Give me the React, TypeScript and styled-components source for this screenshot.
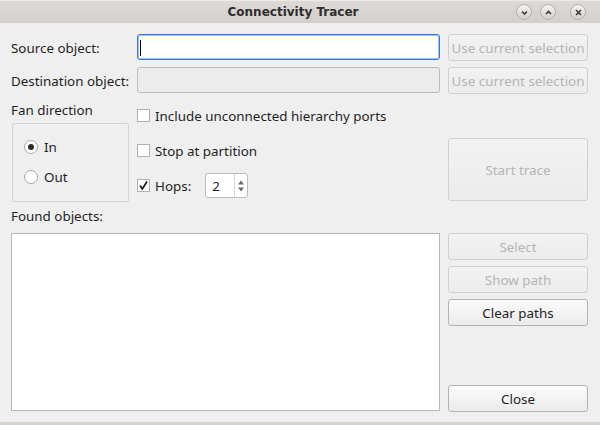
import styled, { createGlobalStyle } from "styled-components";

const GlobalStyle = createGlobalStyle`
  html, body {
    margin: 0;
    padding: 0;
    background: #efefef;
  }
  body {
    font-family: "Noto Sans", "DejaVu Sans", sans-serif;
    font-size: 13.4px;
    color: #1f1f1f;
  }
`;

const Window = styled.div`
  width: 600px;
  height: 425px;
  display: flex;
  flex-direction: column;
  background: #efefef;
  border-bottom: 3px solid #d6d3cf;
  box-sizing: border-box;
`;

const TitleBar = styled.div`
  height: 23px;
  position: relative;
  display: flex;
  align-items: center;
  justify-content: center;
  background: linear-gradient(#dcd9d6, #d3d0cc);
  border-top: 1px solid #ece9e6;
  box-sizing: border-box;
`;

const Title = styled.div`
  font-family: "DejaVu Sans", sans-serif;
  font-weight: bold;
  font-size: 12px;
  color: #2e2e2e;
  margin-left: -14px;
`;

const TitleButtons = styled.div`
  position: absolute;
  right: 14px;
  top: 3px;
  display: flex;
  gap: 8px;
`;

const TitleButton = styled.div<{ $gap?: number }>`
  width: 16px;
  height: 16px;
  border-radius: 50%;
  box-sizing: border-box;
  border: 1px solid #b5b1ad;
  background: linear-gradient(#f6f5f4, #d2cfcc);
  display: flex;
  align-items: center;
  justify-content: center;
  margin-left: ${(p) => p.$gap ?? 0}px;
`;

const Body = styled.div`
  flex: 1;
  display: flex;
  flex-direction: column;
  padding: 11px 12px 10px 11px;
`;

const Row = styled.div<{ $top?: number }>`
  display: grid;
  grid-template-columns: 118px 303px 140px;
  column-gap: 8px;
  height: 27px;
  align-items: center;
  margin-top: ${(p) => p.$top ?? 0}px;
`;

const Label = styled.div`
  white-space: nowrap;
  line-height: 16px;
`;

const TextInput = styled.div<{ $focused?: boolean; $disabled?: boolean }>`
  height: 26px;
  align-self: start;
  box-sizing: border-box;
  border-radius: 3px;
  border: 1px solid ${(p) => (p.$focused ? "#3a7cbd" : "#bcbcbc")};
  box-shadow: ${(p) => (p.$focused ? "inset 0 0 0 1px #9cc1e6" : "none")};
  background: ${(p) => (p.$disabled ? "#ececec" : "#ffffff")};
  padding: 5px 0 0 2px;
`;

const Caret = styled.div`
  width: 1px;
  height: 16px;
  background: #000;
`;

const Button = styled.div<{ $disabled?: boolean; $height?: number; $top?: string }>`
  height: ${(p) => p.$height ?? 27}px;
  box-sizing: border-box;
  border-radius: 3px;
  border: 1px solid ${(p) => (p.$disabled ? "#d0d0d0" : "#b3b3b3")};
  background: ${(p) =>
    p.$disabled ? "linear-gradient(#f2f2f2, #ececec)" : "linear-gradient(#fbfbfb, #ebebeb)"};
  color: ${(p) => (p.$disabled ? "#b5b5b5" : "#1f1f1f")};
  display: flex;
  align-items: center;
  justify-content: center;
  white-space: nowrap;
  margin-top: ${(p) => p.$top ?? "0"};
`;

const Middle = styled.div`
  display: grid;
  grid-template-columns: 118px 303px 140px;
  column-gap: 8px;
  height: 100px;
  margin-top: 8px;
`;

const FanColumn = styled.div`
  display: flex;
  flex-direction: column;
`;

const GroupBox = styled.div`
  margin-top: 5px;
  margin-left: 1px;
  height: 79px;
  box-sizing: border-box;
  border: 1px solid #d3d3d3;
  border-radius: 2px;
  display: flex;
  flex-direction: column;
  justify-content: space-between;
  padding: 14px 0 15px 11px;
`;

const Option = styled.div`
  display: flex;
  align-items: center;
  gap: 6px;
  height: 18px;
`;

const Radio = styled.div<{ $checked?: boolean }>`
  width: 14px;
  height: 14px;
  box-sizing: border-box;
  border-radius: 50%;
  border: 1px solid #a8a8a8;
  background: #fff;
  display: flex;
  align-items: center;
  justify-content: center;
  &::after {
    content: "";
    width: 6px;
    height: 6px;
    border-radius: 50%;
    background: ${(p) => (p.$checked ? "#2c2c2c" : "transparent")};
  }
`;

const Options = styled.div`
  display: flex;
  flex-direction: column;
  gap: 10px;
  padding-top: 1px;
`;

const CheckRow = styled.div`
  display: flex;
  align-items: center;
  height: 25px;
  gap: 5px;
`;

const CheckBox = styled.div`
  width: 13px;
  height: 13px;
  box-sizing: border-box;
  border: 1px solid #b0b0b0;
  background: #fff;
  display: flex;
  align-items: center;
  justify-content: center;
`;

const SpinBox = styled.div`
  margin-left: 9px;
  width: 43px;
  height: 25px;
  box-sizing: border-box;
  border: 1px solid #bcbcbc;
  border-radius: 3px;
  background: #fff;
  display: flex;
`;

const SpinValue = styled.div`
  flex: 1;
  padding-left: 6px;
  display: flex;
  align-items: center;
`;

const SpinArrows = styled.div`
  width: 12px;
  border-left: 1px solid #d8d8d8;
  display: flex;
  align-items: center;
  justify-content: center;
`;

const FoundLabel = styled(Label)`
  margin-top: 6px;
  height: 16px;
`;

const Bottom = styled.div`
  display: grid;
  grid-template-columns: 429px 140px;
  column-gap: 8px;
  margin-top: 9px;
  height: 179px;
`;

const ListBox = styled.div`
  height: 178px;
  box-sizing: border-box;
  border: 1px solid #b8b8b8;
  background: #fff;
`;

const ButtonColumn = styled.div`
  display: flex;
  flex-direction: column;
  gap: 6px;
`;

const Chevron = ({ up }: { up?: boolean }) => (
  <svg width="9" height="9" viewBox="0 0 9 9">
    <path
      d={up ? "M2 6 L4.5 3.5 L7 6" : "M2 3.5 L4.5 6 L7 3.5"}
      stroke="#3a3a3a"
      strokeWidth="1.6"
      fill="none"
    />
  </svg>
);

const CloseGlyph = () => (
  <svg width="9" height="9" viewBox="0 0 9 9">
    <path d="M2 2 L7 7 M7 2 L2 7" stroke="#3a3a3a" strokeWidth="1.6" fill="none" />
  </svg>
);

const Tick = () => (
  <svg width="11" height="11" viewBox="0 0 11 11">
    <path d="M2 5.5 L4.3 9 L9 1.5" stroke="#1a1a1a" strokeWidth="1.7" fill="none" />
  </svg>
);

const SpinGlyph = () => (
  <svg width="8" height="16" viewBox="0 0 8 16">
    <path d="M1 6.5 L4 2.5 L7 6.5 Z" fill="#6b6b6b" />
    <path d="M1 9.5 L4 13.5 L7 9.5 Z" fill="#6b6b6b" />
  </svg>
);

export default function App() {
  return (
    <>
      <GlobalStyle />
      <Window>
        <TitleBar>
          <Title>Connectivity Tracer</Title>
          <TitleButtons>
            <TitleButton>
              <Chevron />
            </TitleButton>
            <TitleButton>
              <Chevron up />
            </TitleButton>
            <TitleButton $gap={6}>
              <CloseGlyph />
            </TitleButton>
          </TitleButtons>
        </TitleBar>
        <Body>
          <Row>
            <Label>Source object:</Label>
            <TextInput $focused>
              <Caret />
            </TextInput>
            <Button $disabled>Use current selection</Button>
          </Row>
          <Row $top={6}>
            <Label>Destination object:</Label>
            <TextInput $disabled />
            <Button $disabled>Use current selection</Button>
          </Row>
          <Middle>
            <FanColumn>
              <Label>Fan direction</Label>
              <GroupBox>
                <Option>
                  <Radio $checked />
                  <span>In</span>
                </Option>
                <Option>
                  <Radio />
                  <span>Out</span>
                </Option>
              </GroupBox>
            </FanColumn>
            <Options>
              <CheckRow>
                <CheckBox />
                <span>Include unconnected hierarchy ports</span>
              </CheckRow>
              <CheckRow>
                <CheckBox />
                <span>Stop at partition</span>
              </CheckRow>
              <CheckRow>
                <CheckBox>
                  <Tick />
                </CheckBox>
                <span>Hops:</span>
                <SpinBox>
                  <SpinValue>2</SpinValue>
                  <SpinArrows>
                    <SpinGlyph />
                  </SpinArrows>
                </SpinBox>
              </CheckRow>
            </Options>
            <Button $disabled $height={63} $top="36px">
              Start trace
            </Button>
          </Middle>
          <FoundLabel>Found objects:</FoundLabel>
          <Bottom>
            <ListBox />
            <ButtonColumn>
              <Button $disabled>Select</Button>
              <Button $disabled>Show path</Button>
              <Button>Clear paths</Button>
              <Button $top="auto">Close</Button>
            </ButtonColumn>
          </Bottom>
        </Body>
      </Window>
    </>
  );
}
